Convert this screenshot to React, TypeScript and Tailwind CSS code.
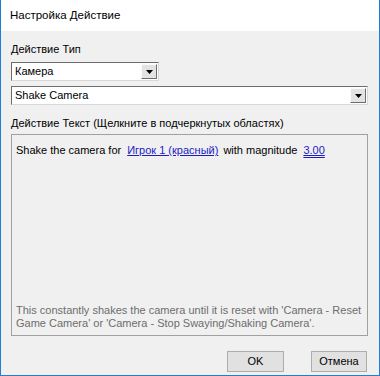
import React from "react";

function Combo({ value, className }: { value: string; className: string }) {
  return (
    <div className={`flex h-[19px] items-stretch border border-t-[#6d6d6d] border-l-[#6d6d6d] border-b-[#d8d8d8] border-r-[#d8d8d8] bg-white ${className}`}>
      <div className="flex flex-1 items-center pl-[3px] text-[11px] leading-none text-black">{value}</div>
      <div className="m-[1px] flex w-[16px] items-center justify-center border border-t-[#fbfbfb] border-l-[#fbfbfb] border-b-[#6d6d6d] border-r-[#6d6d6d] bg-[#e3e3e3]">
        <svg width="7" height="4" viewBox="0 0 7 4">
          <path d="M0 0h7L3.5 4z" fill="#000" />
        </svg>
      </div>
    </div>
  );
}

export default function App() {
  return (
    <div
      className="flex h-[376px] w-[380px] flex-col border border-t-0 border-[#1f7fd6] bg-[#f0f0f0]"
      style={{ fontFamily: '"Liberation Sans", Arial, sans-serif' }}
    >
      {/* Title bar */}
      <div className="flex h-[31px] items-center bg-white pl-[9px] text-[11.5px] text-black">
        Настройка Действие
      </div>

      {/* Client */}
      <div className="flex flex-1 flex-col pl-[10px] pr-[11px] pt-[11px]">
        <div className="text-[11px] leading-[14px] text-black">Действие Тип</div>
        <Combo value="Камера" className="mt-[6px] w-[148px]" />
        <Combo value="Shake Camera" className="mt-[5px] w-full" />
        <div className="mt-[11px] text-[11px] leading-[14px] text-black">
          Действие Текст (Щелкните в подчеркнутых областях)
        </div>

        <div className="mt-[4px] flex h-[202px] flex-col justify-between border border-[#a0a0a0] px-[4px] pb-[5px] pt-[8px] text-[11px]">
          <div className="leading-[14px] text-black">
            Shake the camera for
            <span className="ml-[6px] mr-[5px] text-[#1c1cc4] underline">Игрок 1 (красный)</span>
            with magnitude
            <span className="ml-[6px] text-[#1c1cc4] underline decoration-double">3.00</span>
          </div>
          <div className="leading-[13px] text-[#6d6d6d]">
            This constantly shakes the camera until it is reset with 'Camera - Reset Game Camera' or 'Camera - Stop Swaying/Shaking Camera'.
          </div>
        </div>

        <div className="mt-[15px] flex justify-end gap-[27px] pr-[1px]">
          <button className="h-[21px] w-[57px] border border-[#adadad] bg-[#e1e1e1] text-[11px] leading-none text-black">
            OK
          </button>
          <button className="h-[21px] w-[56px] border border-[#adadad] bg-[#e1e1e1] text-[11px] leading-none text-black">
            Отмена
          </button>
        </div>
      </div>
    </div>
  );
}
